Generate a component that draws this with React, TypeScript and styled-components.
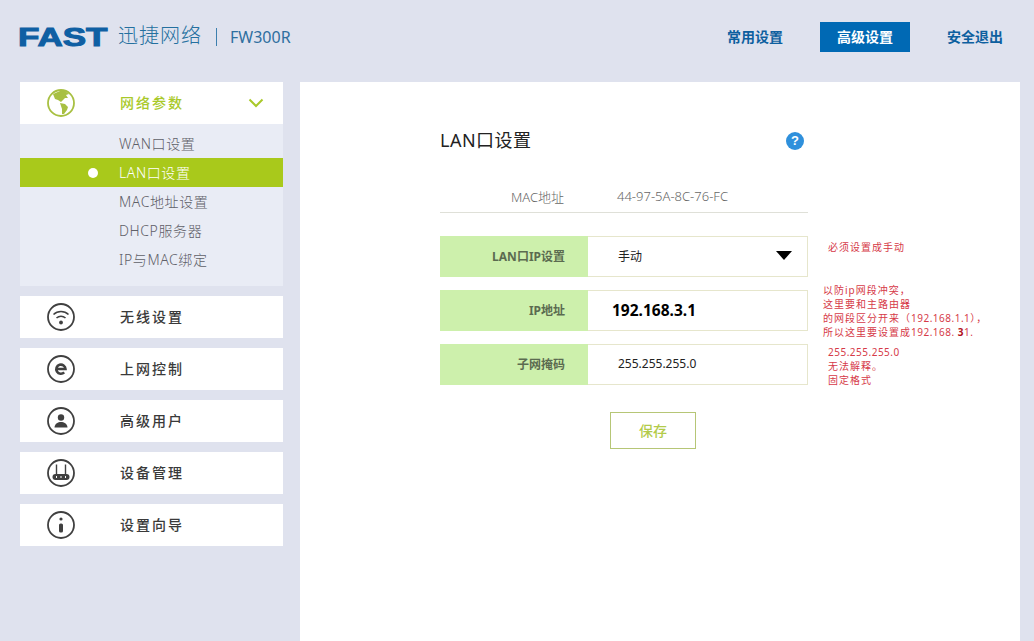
import React from 'react';
import styled, { createGlobalStyle } from 'styled-components';

const Global = createGlobalStyle`
  html, body { margin: 0; padding: 0; height: 641px; overflow: hidden; background: #dfe2ee; }
  body { font-family: "Noto Sans", "Noto Sans CJK SC", sans-serif; }
  * { box-sizing: border-box; }
`;

const Page = styled.div`
  width: 1034px;
  height: 641px;
  overflow: hidden;
  background: #dfe2ee;
  position: relative;
`;
const Header = styled.header`
  height: 82px;
  display: flex;
  justify-content: space-between;
  padding: 22px 14px 0 20px;
`;
const Brand = styled.div`
  display: flex;
  align-items: center;
  height: 30px;
`;
const LogoMark = styled.span`
  display: inline-block;
  width: 88px;
  margin-left: -2px;
  margin-right: 2px;
  font: 900 25px/28px "Liberation Sans", sans-serif;
  color: #0f5fa3;
  -webkit-text-stroke: 1px #0f5fa3;
  transform: scaleX(1.4);
  transform-origin: left center;
`;
const BrandName = styled.span`
  margin-left: 10px;
  font-size: 20px;
  font-weight: 300;
  line-height: 30px;
  letter-spacing: 1px;
  color: #24709f;
  padding-bottom: 2px;
`;
const Divider = styled.span`
  width: 1px;
  height: 18px;
  margin: 0 14px;
  background: #3d7fae;
`;
const Model = styled.span`
  font-size: 16px;
  line-height: 30px;
  color: #2f6f9f;
  margin-left: -1px;
`;
const Nav = styled.nav`
  display: flex;
  gap: 20px;
`;
const NavButton = styled.div<{ $active?: boolean }>`
  width: 90px;
  height: 30px;
  display: flex;
  align-items: center;
  justify-content: center;
  padding-bottom: 2px;
  font-size: 14px;
  font-weight: 700;
  color: ${p => (p.$active ? '#fff' : '#0d5f9f')};
  background: ${p => (p.$active ? '#0069b4' : 'transparent')};
`;
const Body = styled.div`
  display: flex;
  height: 559px;
  padding-left: 20px;
`;
const Sidebar = styled.aside`
  width: 263px;
  margin-right: 17px;
  display: flex;
  flex-direction: column;
`;
const MenuItem = styled.div<{ $open?: boolean }>`
  height: 42px;
  margin-top: ${p => (p.$open ? '0' : '10px')};
  background: #fff;
  display: flex;
  align-items: center;
  padding-left: 27px;
`;
const IconSlot = styled.span`
  width: 28px;
  height: 28px;
  display: block;
  margin-right: 45px;
  flex: none;
`;
const MenuLabel = styled.span<{ $open?: boolean }>`
  flex: 1;
  font-size: 14px;
  font-weight: 500;
  letter-spacing: 2px;
  padding-bottom: 2px;
  color: ${p => (p.$open ? '#a9c92a' : '#3a3a3a')};
`;
const Chevron = styled.svg`
  width: 16px;
  height: 10px;
  margin-right: 19px;
`;
const SubPanel = styled.div`
  height: 162px;
  background: #e9ecf5;
  padding-top: 5px;
`;
const SubItem = styled.div<{ $active?: boolean }>`
  height: 29px;
  display: flex;
  align-items: center;
  padding-left: 68px;
  padding-bottom: 2px;
  font-size: 14px;
  font-weight: 300;
  letter-spacing: 0.6px;
  color: ${p => (p.$active ? '#fff' : '#5f6068')};
  background: ${p => (p.$active ? '#a9c91b' : 'transparent')};
`;
const Bullet = styled.span<{ $show?: boolean }>`
  width: 10px;
  height: 10px;
  border-radius: 50%;
  margin-right: 21px;
  margin-top: 2px;
  background: ${p => (p.$show ? '#fff' : 'transparent')};
`;
const Panel = styled.main`
  width: 720px;
  background: #fff;
  padding: 45px 0 0 140px;
`;
const Form = styled.div`
  width: 368px;
`;
const TitleRow = styled.div`
  height: 28px;
  display: flex;
  align-items: center;
  justify-content: space-between;
  padding-right: 3px;
`;
const Title = styled.h1`
  margin: 0;
  font-size: 18px;
  font-weight: 400;
  line-height: 26px;
  letter-spacing: 0.5px;
  padding-bottom: 2px;
  color: #222;
`;
const Help = styled.span`
  width: 18px;
  height: 18px;
  border-radius: 50%;
  background: #2f90dc;
  color: #fff;
  display: flex;
  align-items: center;
  justify-content: center;
  margin-right: 1px;
  font: 700 13px/18px "Liberation Sans", sans-serif;
`;
const MacRow = styled.div`
  height: 31px;
  margin: 27px 0 23px;
  display: flex;
  align-items: center;
  border-bottom: 1px solid #dfe0d8;
  font-size: 13px;
  font-weight: 300;
  color: #666;
  padding-bottom: 2px;
`;
const MacLabel = styled.span`
  width: 124px;
  text-align: right;
  margin-right: 53px;
`;
const Field = styled.div`
  height: 41px;
  display: flex;
  margin-bottom: 13px;
  position: relative;
`;
const FieldLabel = styled.div`
  width: 148px;
  background: #cdf0ac;
  display: flex;
  align-items: center;
  justify-content: flex-end;
  padding-right: 23px;
  padding-bottom: 2px;
  font-size: 12px;
  font-weight: 700;
  color: #5b6b50;
`;
const FieldValue = styled.div<{ $strong?: boolean }>`
  flex: 1;
  border: 1px solid #e6e6cc;
  border-left: none;
  display: flex;
  align-items: center;
  justify-content: space-between;
  padding: 0 15px 2px ${p => (p.$strong ? '24px' : '30px')};
  font-size: ${p => (p.$strong ? '15.5px' : '12px')};
  font-weight: ${p => (p.$strong ? 700 : 400)};
  color: ${p => (p.$strong ? '#000' : '#222')};
`;
const Caret = styled.span`
  width: 0;
  height: 0;
  border-left: 8.5px solid transparent;
  border-right: 8.5px solid transparent;
  border-top: 9px solid #000;
`;
const Actions = styled.div`
  display: flex;
  padding: 14px 0 0 170px;
`;
const Save = styled.button`
  width: 86px;
  height: 37px;
  background: #fff;
  border: 1px solid #b6c676;
  font-family: inherit;
  font-size: 14px;
  font-weight: 500;
  color: #b3cb4a;
  padding: 0 0 2px;
`;
const Note = styled.div<{ $top: number; $left: number }>`
  position: absolute;
  top: ${p => p.$top}px;
  left: ${p => p.$left}px;
  font-size: 10px;
  line-height: 14px;
  letter-spacing: 1px;
  white-space: nowrap;
  color: #d63a48;
`;
const NoteNum = styled.span`
  letter-spacing: 0.5px;
`;
const NoteStrong = styled.b`
  color: #b01020;
  font-weight: 700;
`;

const Ring: React.FC<{ children: React.ReactNode; color?: string }> = ({ children, color = '#404040' }) => (
  <svg viewBox="0 0 28 28" width="28" height="28" fill="none" stroke={color} strokeWidth="1.8">
    <circle cx="14" cy="14" r="13" />
    {children}
  </svg>
);

const GlobeIcon = () => (
  <Ring color="#a8c042">
    <path fill="#a8c042" stroke="none" d="M6 5 L13 2 L18 2 L22 5 L19 6 L21 9 L18 9 L16 11 L14 13 L11 11 L8 10 Z" />
    <path fill="#a8c042" stroke="none" d="M13 14 L18 15 L21 18 L20 21 L17 25 L15 25 L15 20 Z" />
  </Ring>
);
const WifiIcon = () => (
  <Ring>
    <path d="M6.5 11.5 A11 11 0 0 1 21.5 11.5" strokeWidth="1.6" />
    <path d="M9.5 15 A6.8 6.8 0 0 1 18.5 15" strokeWidth="1.6" />
    <circle cx="14" cy="19.5" r="1.9" fill="#404040" stroke="none" />
  </Ring>
);
const EIcon = () => (
  <Ring>
    <path d="M9.5 14 H18.5 A4.6 4.6 0 1 0 17.2 17.4" strokeWidth="2.6" />
  </Ring>
);
const UserIcon = () => (
  <Ring>
    <circle cx="14" cy="10.5" r="3.2" fill="#404040" stroke="none" />
    <path d="M7.5 20.5 C7.8 16.5 11 15 14 15 C17 15 20.2 16.5 20.5 20.5 Z" fill="#404040" stroke="none" />
  </Ring>
);
const RouterIcon = () => (
  <Ring>
    <path d="M9.5 5.5 V15 M18.5 5.5 V15" strokeWidth="1.4" />
    <rect x="5.5" y="15" width="17" height="6" rx="3" fill="#404040" stroke="none" />
    <path d="M9 18 h1 M13.5 18 h1 M18 18 h1" stroke="#fff" strokeWidth="1.8" />
  </Ring>
);
const InfoIcon = () => (
  <Ring>
    <circle cx="14" cy="8" r="1.6" fill="#404040" stroke="none" />
    <rect x="12" y="12.5" width="4" height="9" rx="1.6" fill="#404040" stroke="none" />
  </Ring>
);

const menu: [string, React.FC][] = [
  ['无线设置', WifiIcon],
  ['上网控制', EIcon],
  ['高级用户', UserIcon],
  ['设备管理', RouterIcon],
  ['设置向导', InfoIcon],
];
const subs = ['WAN口设置', 'LAN口设置', 'MAC地址设置', 'DHCP服务器', 'IP与MAC绑定'];

export default function App() {
  return (
    <Page>
      <Global />
      <Header>
        <Brand>
          <LogoMark>FAST</LogoMark>
          <BrandName>迅捷网络</BrandName>
          <Divider />
          <Model>FW300R</Model>
        </Brand>
        <Nav>
          <NavButton>常用设置</NavButton>
          <NavButton $active>高级设置</NavButton>
          <NavButton>安全退出</NavButton>
        </Nav>
      </Header>
      <Body>
        <Sidebar>
          <MenuItem $open>
            <IconSlot><GlobeIcon /></IconSlot>
            <MenuLabel $open>网络参数</MenuLabel>
            <Chevron viewBox="0 0 16 10" fill="none" stroke="#a9c92a" strokeWidth="2">
              <path d="M1.5 1.5 L8 8 L14.5 1.5" />
            </Chevron>
          </MenuItem>
          <SubPanel>
            {subs.map((s, i) => (
              <SubItem key={s} $active={i === 1}>
                <Bullet $show={i === 1} />
                {s}
              </SubItem>
            ))}
          </SubPanel>
          {menu.map(([label, Icon]) => (
            <MenuItem key={label}>
              <IconSlot><Icon /></IconSlot>
              <MenuLabel>{label}</MenuLabel>
            </MenuItem>
          ))}
        </Sidebar>
        <Panel>
          <Form>
            <TitleRow>
              <Title>LAN口设置</Title>
              <Help>?</Help>
            </TitleRow>
            <MacRow>
              <MacLabel>MAC地址</MacLabel>
              44-97-5A-8C-76-FC
            </MacRow>
            <Field>
              <FieldLabel>LAN口IP设置</FieldLabel>
              <FieldValue>手动<Caret /></FieldValue>
              <Note $top={4} $left={388}>必须设置成手动</Note>
            </Field>
            <Field>
              <FieldLabel>IP地址</FieldLabel>
              <FieldValue $strong>192.168.3.1</FieldValue>
              <Note $top={-7} $left={383}>
                以防ip网段冲突，<br />
                这里要和主路由器<br />
                的网段区分开来（<NoteNum>192.168.1.1</NoteNum>），<br />
                所以这里要设置成<NoteNum>192.168. <NoteStrong>3</NoteStrong>1.</NoteNum>
              </Note>
            </Field>
            <Field>
              <FieldLabel>子网掩码</FieldLabel>
              <FieldValue>255.255.255.0</FieldValue>
              <Note $top={1} $left={388}>
                <NoteNum>255.255.255.0</NoteNum><br />
                无法解释。<br />
                固定格式
              </Note>
            </Field>
            <Actions>
              <Save>保存</Save>
            </Actions>
          </Form>
        </Panel>
      </Body>
    </Page>
  );
}
